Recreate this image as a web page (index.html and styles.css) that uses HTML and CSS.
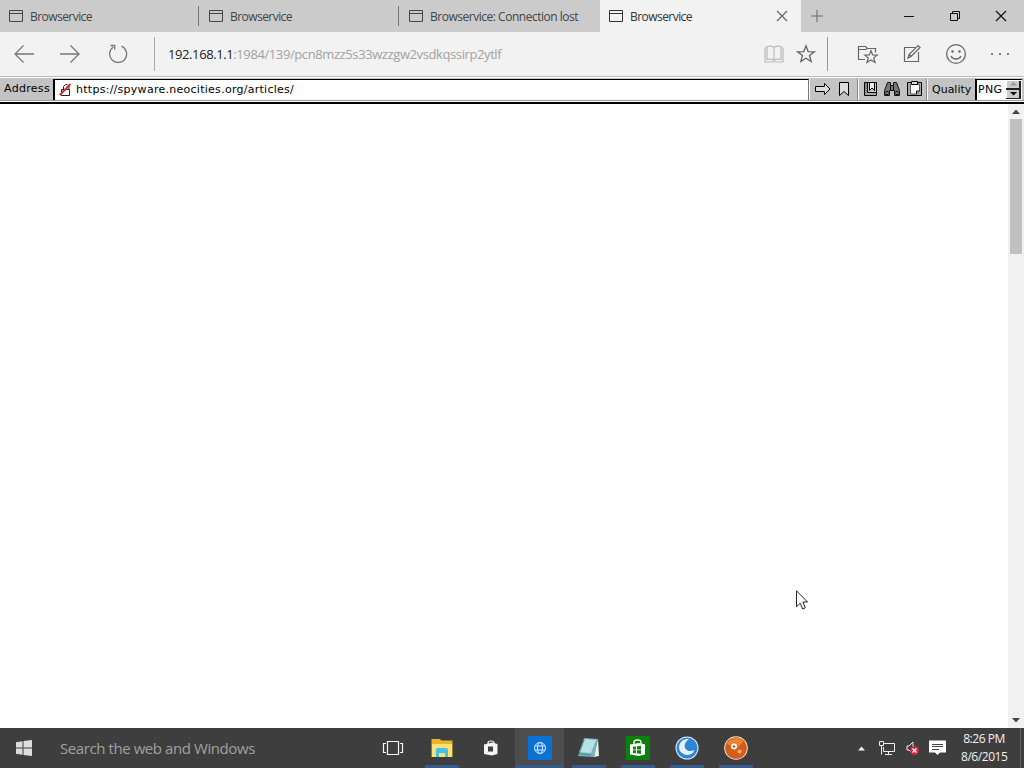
FILE: index.html
```html
<!DOCTYPE html>
<html lang="en">
<head>
    <meta charset="UTF-8">
    <meta name="viewport" content="width=device-width, initial-scale=1.0">
    <title>Browservice</title>
    <link rel="stylesheet" href="styles.css">
</head>
<body>
    <svg class="defs">
        <symbol id="page" viewBox="0 0 14 12">
            <path d="M.5.5h13v11H.5zM.5 3.5h13" fill="none" stroke="currentColor"/>
        </symbol>
    </svg>

    <div class="tabs">
        <div class="tab"><svg class="page-icon"><use href="#page"/></svg><span>Browservice</span></div>
        <div class="tab"><svg class="page-icon"><use href="#page"/></svg><span>Browservice</span></div>
        <div class="tab last"><svg class="page-icon"><use href="#page"/></svg><span>Browservice: Connection lost</span></div>
        <div class="tab active"><svg class="page-icon"><use href="#page"/></svg><span>Browservice</span>
            <svg class="close" width="12" height="12"><path d="M1 1l10 10M11 1L1 11" fill="none" stroke="#666" stroke-width="1.2"/></svg>
        </div>
        <div class="new-tab"><svg width="14" height="14"><path d="M7 1v12M1 7h12" fill="none" stroke="#888" stroke-width="1.6"/></svg></div>
        <div class="caption">
            <div><svg width="12" height="12"><path d="M1 6.5h10" stroke="#111"/></svg></div>
            <div><svg width="12" height="12"><path d="M1.500 3.500h7v7h-7zM3.500 3.500v-2h7v7h-2" fill="none" stroke="#111"/></svg></div>
            <div><svg width="12" height="12"><path d="M1 1l10 10M11 1L1 11" fill="none" stroke="#111" stroke-width="1.2"/></svg></div>
        </div>
    </div>

    <div class="nav">
        <div class="nav-btn"><svg width="22" height="20"><path d="M21 10H2M10.500 1.500L2 10l8.500 8.500" fill="none" stroke="#777" stroke-width="1.3"/></svg></div>
        <div class="nav-btn"><svg width="22" height="20"><path d="M1 10h19M11.500 1.500L20 10l-8.500 8.500" fill="none" stroke="#777" stroke-width="1.3"/></svg></div>
        <div class="refresh"><svg width="20" height="20"><path d="M13.500 2.200A8.500 8.500 0 1 1 5.300 3M2.500 1.500h4.200v4.200" fill="none" stroke="#777" stroke-width="1.3"/></svg></div>
        <div class="url"><b>192.168.1.1</b><span>:1984/139/pcn8mzz5s33wzzgw2vsdkqssirp2ytlf</span></div>
        <svg class="book" width="20" height="18"><path d="M10 2.500C8 1 5 1 3 1.500v13c2-.5 5-.5 7 1 2-1.500 5-1.500 7-1v-13c-2-.5-5-.5-7 1v13M3 3H1v14h18V3h-2" fill="none" stroke="#bbb" stroke-width="1.2"/></svg>
        <svg class="star" width="20" height="20"><path d="M10 1.800l2.200 5.800 6.200.2-4.900 3.800 1.700 6L10 14.200l-5.200 3.400 1.700-6L1.600 7.800l6.200-.2z" fill="none" stroke="#666" stroke-width="1.3"/></svg>
        <div class="tools">
            <svg width="22" height="20"><path d="M8 15.500H1.500v-13h7l2 2h8v4M1.500 5.500h7l2-1M14 6.800l1.700 4.200 4.500.1-3.500 2.800 1.300 4.500-4-2.500-4 2.500 1.300-4.500-3.500-2.800 4.500-.1z" fill="none" stroke="#666" stroke-width="1.2"/></svg>
            <svg width="20" height="20"><path d="M13 3.500H2.500v14h14V8M6 14l1-3.500 9-9 2 2-9 9zM7 10.500l2 2" fill="none" stroke="#666" stroke-width="1.2"/></svg>
            <svg width="22" height="22"><circle cx="11" cy="11" r="9.400" fill="none" stroke="#666" stroke-width="1.3"/><circle cx="7.500" cy="8.500" r="1.200" fill="#666"/><circle cx="14.500" cy="8.500" r="1.200" fill="#666"/><path d="M6 13c2 4 8 4 10 0" fill="none" stroke="#666" stroke-width="1.3"/></svg>
            <svg width="20" height="4"><circle cx="2" cy="2" r="1.100" fill="#666"/><circle cx="10" cy="2" r="1.100" fill="#666"/><circle cx="18" cy="2" r="1.100" fill="#666"/></svg>
        </div>
    </div>

    <div class="bar">
        <label class="addr-label">Address</label>
        <div class="addr">
            <svg width="13" height="13"><path d="M2.500 6.500h8v6h-8zM4.500 6V3.500l2-2H8l2 2V6" fill="none" stroke="#222"/><path d="M.8 12L11.500 1" stroke="#d0303a" stroke-width="2"/></svg>
            <span>https://spyware.neocities.org/articles/</span>
        </div>
        <div class="group go">
            <svg width="16" height="12"><path d="M.5 3.500h9v-3l5.500 5.500-5.500 5.500v-3h-9z" fill="#ddd" stroke="#000"/></svg>
            <svg width="12" height="16"><path d="M1.500 1.500h9v13L6 10.500l-4.500 4z" fill="#ddd" stroke="#000"/></svg>
        </div>
        <div class="group actions">
            <svg width="15" height="16"><path d="M1.500 1.500h12v13h-12z" fill="#888" stroke="#000"/><path d="M4.500 1.500h9v10h-9z" fill="#c8c8c8" stroke="#000"/><path d="M6.500 2v7.500L9 7l2.500 2.500V2" fill="#eee" stroke="#000"/><path d="M3 13h10" stroke="#ccc"/></svg>
            <svg width="18" height="16"><path d="M4.500 1.500h3v3h3v-3h3l3 8v5h-5v-5h-5v5h-5v-5z" fill="#777" stroke="#111"/><path d="M7.500 4.500v5M10.500 4.500v5M3 10.500h2v3H3zM13 10.500h2v3h-2z" fill="#ddd" stroke="#111"/></svg>
            <svg width="17" height="17"><path d="M1.500 2.500h14v13h-14z" fill="#aaa" stroke="#000"/><path d="M4.500 4.500h9v6.500l-3 3h-6z" fill="#fff" stroke="#555"/><path d="M5.500 1.500h6v3h-6z" fill="#ddd" stroke="#000"/><path d="M13.500 11h-3v3" fill="none" stroke="#000"/></svg>
        </div>
        <div class="group quality">
            <label>Quality</label>
            <div class="select"><span>PNG</span>
                <div class="spin">
                    <i><svg width="7" height="4"><path d="M0 3.500L3.500 0 7 3.500z" fill="#999"/></svg></i>
                    <i><svg width="7" height="4"><path d="M0 0h7L3.500 3.500z"/></svg></i>
                </div>
            </div>
        </div>
    </div>

    <div class="view">
        <div class="scroll">
            <svg width="8" height="5"><path d="M0 5l4-4.500L8 5z" fill="#444"/></svg>
            <div class="thumb"></div>
            <svg class="down" width="8" height="5"><path d="M0 0h8L4 4.500z" fill="#444"/></svg>
        </div>
        <svg class="cursor" width="12" height="20"><path d="M.5.8v16l3.700-3.600 2.500 5.800 2.600-1.200L6.900 12h4.600z" fill="#fff" stroke="#222"/></svg>
    </div>

    <div class="taskbar">
        <div class="start"><svg width="16" height="16"><path d="M0 2.200L6.500 1.300v6.200H0zM7.500 1.100L16 0v7.500H7.500zM0 8.500h6.500v6.200L0 13.800zM7.500 8.500H16V16l-8.500-1.100z" fill="#ddd"/></svg></div>
        <div class="search">Search the web and Windows</div>
        <div class="tasks">
            <div class="task"><svg width="22" height="16"><path d="M5.500 1.500h11v13h-11zM4 3.500H1.500v9H4M18 3.500h2.500v9H18" fill="none" stroke="#f4f4f4" stroke-width="1.200"/></svg></div>
            <div class="task open"><svg width="22" height="20"><path d="M.5 1h8l2 1.500h11V19H.5z" fill="#e8b52c"/><path d="M1 6h20v13H1z" fill="#fbe07a"/><path d="M5 19v-7q0-2 2-2h8q2 0 2 2v7h-3v-4H8v4z" fill="#3fc3e8"/></svg></div>
            <div class="task"><svg width="16" height="16"><path d="M1 4.500l8-2 5.500 1.500v10L9 15.500 1 14z" fill="#f4f4f4"/><path d="M5 5V3q0-2 3-2t3 2v2" fill="none" stroke="#f4f4f4" stroke-width="1.200"/><path d="M5 6.500h5v5H5z" fill="#3e3e3e"/></svg></div>
            <div class="task open current"><svg width="24" height="24"><path d="M0 0h24v24H0z" fill="#0873d4"/><g fill="none" stroke="#d8ebff"><circle cx="12" cy="12" r="5.500"/><ellipse cx="12" cy="12" rx="2.500" ry="5.500"/><path d="M7 10h10M7 14h10"/></g></svg></div>
            <div class="task open"><svg width="24" height="22"><path d="M7 1l14 1-4 18-16-1z" fill="#74b6bd"/><path d="M8 2l11 1-5 13-12-1z" fill="#b9e0e2"/><path d="M21 2l1 17-5 1z" fill="#e8eeee"/><path d="M7 3l-5 14 12 1" fill="none" stroke="#478a94"/></svg></div>
            <div class="task open"><svg width="24" height="24"><path d="M0 0h24v24H0z" fill="#0b800b"/><path d="M4 8.500L13 7l6 1.500v10L13 20l-9-1.500z" fill="#fff"/><path d="M8 9V6q0-2 3.500-2T15 6v2" fill="none" stroke="#fff" stroke-width="1.300"/><path d="M7 10.800l3-.4v3H7zM11 10.300l4-.4v3.500h-4zM7 14.300h3v3l-3-.4zM11 14.300h4v3.500l-4-.4z" fill="#0b800b"/></svg></div>
            <div class="task open"><svg width="24" height="24"><circle cx="12" cy="12" r="11.500" fill="#dcecf8"/><circle cx="12" cy="12" r="10.500" fill="#2f86d6"/><path d="M14 3C5 2 1 12 7 17c5 4 12 1 12-3-5 3-11-1-9-6 1-3 3-4 4-5z" fill="#e2f2ff"/></svg></div>
            <div class="task open"><svg width="24" height="24"><circle cx="12" cy="12" r="11.800" fill="#efe4d8"/><circle cx="12" cy="12" r="10.800" fill="#d55b1a"/><path d="M3 8a10 10 0 0 1 17-3l-7 7z" fill="#e98532"/><circle cx="10" cy="10.500" r="3" fill="#fff"/><circle cx="10" cy="10.500" r="1.200" fill="#c54a10"/><circle cx="15.500" cy="15.500" r="2" fill="#ffb36b"/></svg></div>
        </div>
        <div class="tray">
            <svg class="chevron" width="7" height="5"><path d="M0 4.500L3.500.5 7 4.500z" fill="#eee"/></svg>
            <svg class="net" width="17" height="14"><path d="M4 2.500h11.500v8H4.500V6M9.500 10.500v3M6 13.500h7" fill="none" stroke="#eee"/><path d="M.5.500h4v4h-4zM2.500 4.500v9" fill="#3e3e3e" stroke="#eee"/></svg>
            <svg class="sound" width="14" height="15"><path d="M1 5h2l4-4v9M1 5v4h2l2 2" fill="none" stroke="#eee"/><circle cx="8.500" cy="9.500" r="4.500" fill="#d32643"/><path d="M6.500 7.500l4 4M10.500 7.500l-4 4" stroke="#fff" stroke-width="1.200"/></svg>
            <svg class="note" width="17" height="16"><path d="M0 .5h17v12h-6L8.500 15 6 12.500H0z" fill="#fff"/><path d="M3 4.500h11M3 6.500h11M3 9.500h7" stroke="#444"/></svg>
            <div class="clock"><div>8:26 PM</div><div>8/6/2015</div></div>
        </div>
    </div>
</body>
</html>
```
FILE: styles.css
```css
* {
    box-sizing: border-box;
}
body {
    display: grid;
    grid-template-rows: 32px 44px 28px 1fr 40px;
    width: 1024px;
    height: 768px;
    margin: 0;
    overflow: hidden;
    background: #fff;
    font-family: "Open Sans", "Noto Sans", sans-serif;
}
svg {
    display: block;
    flex: none;
}
.defs {
    position: absolute;
    width: 0;
    height: 0;
}
.tabs {
    display: flex;
    background: #cbcbcb;
}
.tab {
    display: flex;
    align-items: center;
    width: 200px;
    padding: 0 13px 0 9px;
    font-size: 12px;
    letter-spacing: -0.55px;
    color: #444;
    background: linear-gradient(#777, #777) 198px 6px / 1px 20px no-repeat;
}
.tab.last {
    letter-spacing: -0.48px;
    background: none;
}
.tab.active {
    width: 201px;
    color: #333;
    background: #f2f2f2;
}
.tab span {
    margin: 1px 0 0 7px;
    white-space: nowrap;
}
.page-icon {
    width: 14px;
    height: 12px;
}
.close {
    margin-left: auto;
}
.new-tab {
    display: flex;
    align-items: center;
    padding-left: 9px;
}
.caption {
    display: flex;
    margin-left: auto;
}
.caption div {
    display: flex;
    align-items: center;
    justify-content: center;
    width: 46px;
}
.nav {
    display: flex;
    align-items: center;
    background: #f2f2f2;
}
.nav-btn {
    display: flex;
    justify-content: center;
    width: 46px;
    padding-left: 1px;
}
.refresh {
    display: flex;
    align-items: center;
    width: 63px;
    height: 34px;
    margin-right: 13px;
    padding-left: 16px;
    border-right: 1px solid #aaa;
}
.url {
    flex: 1;
    font-size: 13px;
    letter-spacing: -0.4px;
    color: #a2a2a2;
}
.url b {
    font-weight: normal;
    color: #222;
}
.star {
    margin: 0 11px 0 12px;
}
.tools {
    display: flex;
    align-items: center;
    gap: 23px;
    height: 34px;
    padding: 0 14px 0 29px;
    border-left: 1px solid #999;
}
.bar {
    display: flex;
    padding: 2px 2px 2px 1px;
    background: #c3c3c3;
    border-top: 1px solid #bbb;
    border-bottom: 2px solid #000;
    box-shadow: inset 0 1px #fff, inset 0 -1px #fff, inset 0 -2px #999;
    font-family: "DejaVu Sans", sans-serif;
    font-size: 11px;
    color: #000;
}
.addr-label {
    width: 52px;
    padding-left: 3px;
    line-height: 20px;
    letter-spacing: 0.3px;
}
.addr {
    display: flex;
    align-items: center;
    width: 756px;
    padding: 0 0 2px 4px;
    background: #fff;
    border: solid #000;
    border-width: 1px 0 0 2px;
    border-right: 1px solid #777;
}
.addr span {
    margin-left: 4px;
    letter-spacing: 0.27px;
}
.group {
    display: flex;
    align-items: center;
    padding-bottom: 2px;
    border-left: 1px solid #fff;
}
.go {
    width: 49px;
    padding-left: 5px;
    gap: 7px;
    border-right: 1px solid #888;
}
.actions {
    gap: 5px;
    width: 69px;
    padding-left: 4px;
    border-right: 1px solid #888;
}
.quality {
    flex: 1;
    padding: 0 0 0 4px;
    justify-content: space-between;
}
.select {
    display: flex;
    align-items: center;
    justify-content: space-between;
    width: 47px;
    height: 100%;
    padding: 0 1px 1px 1px;
    background: #fff;
    border: solid #000;
    border-width: 1px 0 0 2px;
    letter-spacing: 0.3px;
}
.quality label {
    margin-bottom: 1px;
}
.spin {
    display: flex;
    flex-direction: column;
    gap: 2px;
    width: 15px;
    height: 18px;
    padding: 0 2px 1px 0;
    background: #222;
}
.spin i {
    display: flex;
    flex: 1;
    align-items: center;
    justify-content: center;
    background: #ccc;
    border-left: 1px solid #fff;
}
.view {
    position: relative;
    display: flex;
    justify-content: flex-end;
    background: #fefefe;
}
.scroll {
    display: flex;
    flex-direction: column;
    align-items: center;
    width: 16px;
    padding: 5px 0;
    background: #f1f1f1;
}
.thumb {
    width: 12px;
    height: 135px;
    margin-top: 5px;
    background: #c1c1c1;
}
.down {
    margin-top: auto;
}
.cursor {
    position: absolute;
    left: 796px;
    top: 486px;
}
.taskbar {
    display: flex;
    background: #3e3e3e;
    color: #a0a0a0;
}
.start {
    display: flex;
    align-items: center;
    width: 60px;
    padding-left: 16px;
}
.search {
    width: 308px;
    font-size: 15px;
    line-height: 41px;
    letter-spacing: -0.42px;
}
.tasks {
    display: flex;
}
.task {
    display: flex;
    align-items: center;
    justify-content: center;
    width: 49.1px;
}
.open {
    background: linear-gradient(#365a8c, #365a8c) center bottom / 34px 3px no-repeat;
}
.current {
    background-color: #4d4d4d;
    background-size: 100% 3px;
}
.tray {
    display: flex;
    align-items: center;
    margin-left: auto;
    padding-right: 3px;
}
.net {
    margin-left: 14px;
}
.sound {
    margin-left: 10px;
}
.note {
    margin: 0 15px 0 9px;
}
.clock {
    width: 60px;
    height: 40px;
    padding: 2px 13px 0 0;
    border-right: 1px solid #666;
    font-size: 12px;
    line-height: 18px;
    letter-spacing: -0.45px;
    text-align: center;
    white-space: nowrap;
    color: #f2f2f2;
}
```
